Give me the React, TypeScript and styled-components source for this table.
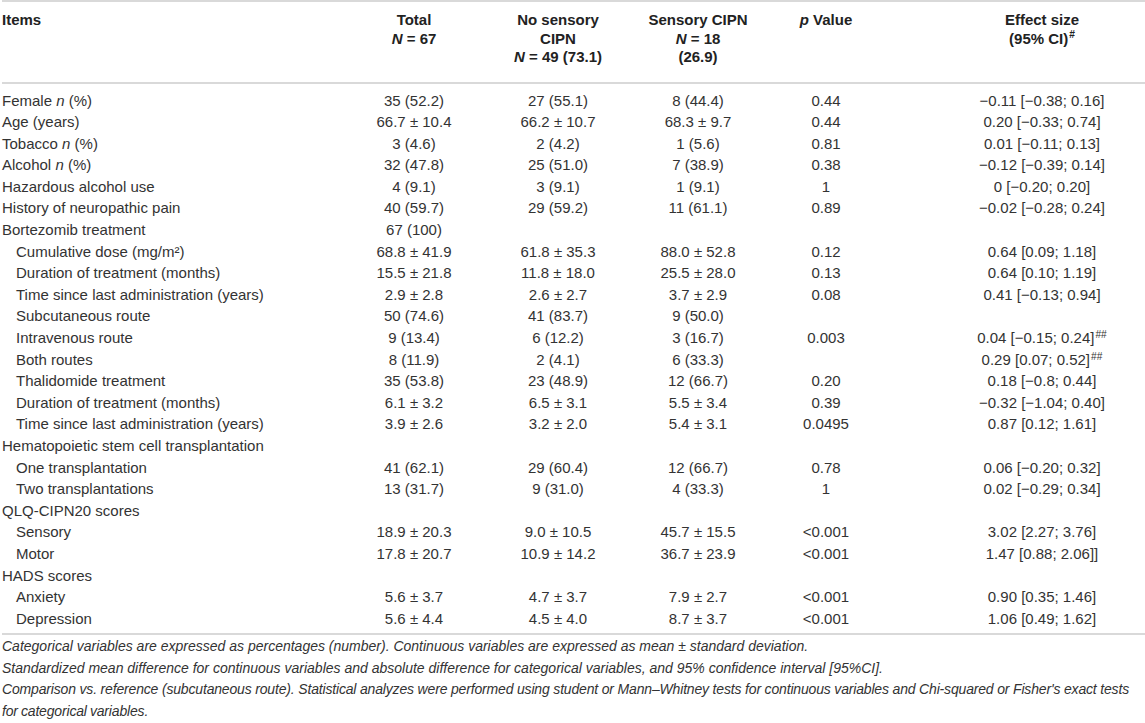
import React from "react";
import styled, { createGlobalStyle } from "styled-components";

const Global = createGlobalStyle`
  html, body { margin: 0; padding: 0; background: #ffffff; }
  body { font-family: "Liberation Sans", Arial, sans-serif; color: #333333; }
`;

const Page = styled.div`
  width: 1145px;
  box-sizing: border-box;
  padding: 0 0 0 2px;
`;

const Table = styled.table`
  width: 100%;
  border-collapse: collapse;
  table-layout: fixed;
  border-top: 2px solid #d9d9d9;
  border-bottom: 2px solid #d9d9d9;
  font-size: 15px;
`;

const Col = styled.col<{ $w: number }>`
  width: ${(p) => p.$w}px;
`;

const HeadRow = styled.tr`
  border-bottom: 2px solid #d9d9d9;
`;

const HeadCell = styled.th<{ $align?: "left" | "center"; $pl?: number }>`
  font-weight: bold;
  color: #222222;
  text-align: ${(p) => p.$align ?? "center"};
  vertical-align: top;
  line-height: 18.5px;
  padding: 9px 0 15px ${(p) => p.$pl ?? 0}px;
`;

const BodyRow = styled.tr``;

const Cell = styled.td<{ $align?: "left" | "center"; $indent?: boolean; $pl?: number }>`
  text-align: ${(p) => p.$align ?? "center"};
  line-height: 21.6px;
  padding: 0 0 0 ${(p) => (p.$indent ? 14 : p.$pl ?? 0)}px;
  white-space: nowrap;
  ${BodyRow}:first-child > & { padding-top: 6px; }
  ${BodyRow}:last-child > & { padding-bottom: 4px; }
`;

const Sup = styled.sup`
  font-size: 0.68em;
  line-height: 0;
  vertical-align: 0.5em;
  margin-left: 1px;
`;

const Notes = styled.div`
  padding: 1px 16px 0 0;
  font-style: italic;
  font-size: 14px;
  line-height: 21.5px;
`;

const Note = styled.p<{ $tight?: boolean }>`
  margin: 0;
  text-align: ${(p) => (p.$tight ? "justify" : "left")};
  letter-spacing: ${(p) => (p.$tight ? "-0.17px" : "normal")};
  word-spacing: ${(p) => (p.$tight ? "-0.6px" : "normal")};
`;

type Row = {
  label: React.ReactNode;
  indent?: boolean;
  total?: string;
  no?: string;
  yes?: string;
  p?: string;
  effect?: string;
  sup?: string;
};

const n = <i>n</i>;

const rows: Row[] = [
  { label: <>Female {n} (%)</>, total: "35 (52.2)", no: "27 (55.1)", yes: "8 (44.4)", p: "0.44", effect: "−0.11 [−0.38; 0.16]" },
  { label: "Age (years)", total: "66.7 ± 10.4", no: "66.2 ± 10.7", yes: "68.3 ± 9.7", p: "0.44", effect: "0.20 [−0.33; 0.74]" },
  { label: <>Tobacco {n} (%)</>, total: "3 (4.6)", no: "2 (4.2)", yes: "1 (5.6)", p: "0.81", effect: "0.01 [−0.11; 0.13]" },
  { label: <>Alcohol {n} (%)</>, total: "32 (47.8)", no: "25 (51.0)", yes: "7 (38.9)", p: "0.38", effect: "−0.12 [−0.39; 0.14]" },
  { label: "Hazardous alcohol use", total: "4 (9.1)", no: "3 (9.1)", yes: "1 (9.1)", p: "1", effect: "0 [−0.20; 0.20]" },
  { label: "History of neuropathic pain", total: "40 (59.7)", no: "29 (59.2)", yes: "11 (61.1)", p: "0.89", effect: "−0.02 [−0.28; 0.24]" },
  { label: "Bortezomib treatment", total: "67 (100)" },
  { label: "Cumulative dose (mg/m²)", indent: true, total: "68.8 ± 41.9", no: "61.8 ± 35.3", yes: "88.0 ± 52.8", p: "0.12", effect: "0.64 [0.09; 1.18]" },
  { label: "Duration of treatment (months)", indent: true, total: "15.5 ± 21.8", no: "11.8 ± 18.0", yes: "25.5 ± 28.0", p: "0.13", effect: "0.64 [0.10; 1.19]" },
  { label: "Time since last administration (years)", indent: true, total: "2.9 ± 2.8", no: "2.6 ± 2.7", yes: "3.7 ± 2.9", p: "0.08", effect: "0.41 [−0.13; 0.94]" },
  { label: "Subcutaneous route", indent: true, total: "50 (74.6)", no: "41 (83.7)", yes: "9 (50.0)" },
  { label: "Intravenous route", indent: true, total: "9 (13.4)", no: "6 (12.2)", yes: "3 (16.7)", p: "0.003", effect: "0.04 [−0.15; 0.24]", sup: "##" },
  { label: "Both routes", indent: true, total: "8 (11.9)", no: "2 (4.1)", yes: "6 (33.3)", effect: "0.29 [0.07; 0.52]", sup: "##" },
  { label: "Thalidomide treatment", indent: true, total: "35 (53.8)", no: "23 (48.9)", yes: "12 (66.7)", p: "0.20", effect: "0.18 [−0.8; 0.44]" },
  { label: "Duration of treatment (months)", indent: true, total: "6.1 ± 3.2", no: "6.5 ± 3.1", yes: "5.5 ± 3.4", p: "0.39", effect: "−0.32 [−1.04; 0.40]" },
  { label: "Time since last administration (years)", indent: true, total: "3.9 ± 2.6", no: "3.2 ± 2.0", yes: "5.4 ± 3.1", p: "0.0495", effect: "0.87 [0.12; 1.61]" },
  { label: "Hematopoietic stem cell transplantation" },
  { label: "One transplantation", indent: true, total: "41 (62.1)", no: "29 (60.4)", yes: "12 (66.7)", p: "0.78", effect: "0.06 [−0.20; 0.32]" },
  { label: "Two transplantations", indent: true, total: "13 (31.7)", no: "9 (31.0)", yes: "4 (33.3)", p: "1", effect: "0.02 [−0.29; 0.34]" },
  { label: "QLQ-CIPN20 scores" },
  { label: "Sensory", indent: true, total: "18.9 ± 20.3", no: "9.0 ± 10.5", yes: "45.7 ± 15.5", p: "<0.001", effect: "3.02 [2.27; 3.76]" },
  { label: "Motor", indent: true, total: "17.8 ± 20.7", no: "10.9 ± 14.2", yes: "36.7 ± 23.9", p: "<0.001", effect: "1.47 [0.88; 2.06]]" },
  { label: "HADS scores" },
  { label: "Anxiety", indent: true, total: "5.6 ± 3.7", no: "4.7 ± 3.7", yes: "7.9 ± 2.7", p: "<0.001", effect: "0.90 [0.35; 1.46]" },
  { label: "Depression", indent: true, total: "5.6 ± 4.4", no: "4.5 ± 4.0", yes: "8.7 ± 3.7", p: "<0.001", effect: "1.06 [0.49; 1.62]" },
];

const N = <i>N</i>;

export default function App() {
  return (
    <Page>
      <Global />
      <Table>
        <colgroup>
          <Col $w={343} />
          <Col $w={138} />
          <Col $w={150} />
          <Col $w={130} />
          <Col $w={126} />
          <Col $w={256} />
        </colgroup>
        <thead>
          <HeadRow>
            <HeadCell $align="left">Items</HeadCell>
            <HeadCell>
              Total
              <br />
              {N} = 67
            </HeadCell>
            <HeadCell>
              No sensory
              <br />
              CIPN
              <br />
              {N} = 49 (73.1)
            </HeadCell>
            <HeadCell>
              Sensory CIPN
              <br />
              {N} = 18
              <br />
              (26.9)
            </HeadCell>
            <HeadCell>
              <i>p</i> Value
            </HeadCell>
            <HeadCell $pl={50}>
              Effect size
              <br />
              (95% CI)<Sup>#</Sup>
            </HeadCell>
          </HeadRow>
        </thead>
        <tbody>
          {rows.map((r, i) => (
            <BodyRow key={i}>
              <Cell $align="left" $indent={r.indent}>{r.label}</Cell>
              <Cell>{r.total}</Cell>
              <Cell>{r.no}</Cell>
              <Cell>{r.yes}</Cell>
              <Cell>{r.p}</Cell>
              <Cell $pl={50}>
                {r.effect}
                {r.sup && <Sup>{r.sup}</Sup>}
              </Cell>
            </BodyRow>
          ))}
        </tbody>
      </Table>
      <Notes>
        <Note>
          Categorical variables are expressed as percentages (number). Continuous variables are expressed as mean ± standard deviation.
        </Note>
        <Note>
          Standardized mean difference for continuous variables and absolute difference for categorical variables, and 95% confidence interval [95%CI].
        </Note>
        <Note $tight>
          Comparison vs. reference (subcutaneous route). Statistical analyzes were performed using student or Mann–Whitney tests for continuous variables and Chi-squared or Fisher's exact tests for categorical variables.
        </Note>
      </Notes>
    </Page>
  );
}
